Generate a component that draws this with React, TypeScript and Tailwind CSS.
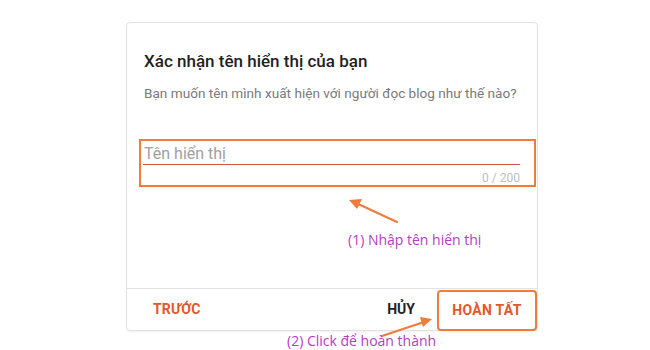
export default function App() {
  return (
    <div className="relative w-[650px] h-[350px] bg-white overflow-hidden" style={{ fontFamily: "Roboto, 'Noto Sans', sans-serif" }}>
      <div className="pt-[22px] pl-[126px]">
        {/* Dialog card */}
        <div className="w-[412px] rounded border border-[#e2e2e2] bg-white shadow-[0_1px_2px_rgba(0,0,0,0.06)]">
          <div className="h-[265px] px-[17px] pt-[28px]">
            <h2 className="text-[17px] leading-[20px] font-medium text-[#1f1f1f]">Xác nhận tên hiển thị của bạn</h2>
            <p className="mt-[13px] text-[13.6px] leading-[18px] text-[#7a7a7a]">
              Bạn muốn tên mình xuất hiện với người đọc blog như thế nào?
            </p>
            <div className="mt-[37px] -ml-[5px] -mr-[16px] h-[48px] border-2 border-[#f07b3b] pl-[2px] pr-[14px] pt-[3px]">
              <div className="border-b border-[#c9573a] pl-[1px] text-[16px] leading-[20px] text-[#a0a0a0]">Tên hiển thị</div>
              <div className="mt-[6px] text-right text-[12px] leading-[14px] text-[#bdbdbd]">0 / 200</div>
            </div>
          </div>
          <div className="flex h-[42px] items-center border-t border-[#e2e2e2]">
            <button className="ml-[26px] text-[14px] font-bold tracking-[0.2px] text-[#e2582b]">TRƯỚC</button>
            <div className="ml-auto flex items-center">
              <button className="text-[14px] font-bold text-[#222]">HỦY</button>
              <button className="ml-[22px] mt-[1px] h-[41px] w-[100px] rounded-sm border-2 border-[#f07b3b] text-[14px] font-bold tracking-[0.3px] text-[#e2582b]">
                HOÀN TẤT
              </button>
            </div>
          </div>
        </div>
      </div>

      {/* Annotations */}
      <svg className="absolute left-0 top-0" width="650" height="350" viewBox="0 0 650 350">
        <line x1="397" y1="222" x2="356" y2="203" stroke="#f07b3b" strokeWidth="2.2" strokeLinecap="round" />
        <polygon points="349,200 362,199 357,209" fill="#f07b3b" />
        <line x1="382" y1="336" x2="424" y2="322" stroke="#f07b3b" strokeWidth="2.2" strokeLinecap="round" />
        <polygon points="432,319 420,317 423,327" fill="#f07b3b" />
      </svg>
      <div className="absolute left-[348px] top-[231px] text-[14px] leading-[18px] text-[#b53cc4]" style={{ fontFamily: "'Open Sans', sans-serif" }}>
        (1) Nhập tên hiển thị
      </div>
      <div className="absolute left-[287px] top-[333px] text-[14px] leading-[16px] text-[#b53cc4]" style={{ fontFamily: "'Open Sans', sans-serif" }}>
        (2) Click để hoàn thành
      </div>
    </div>
  );
}
